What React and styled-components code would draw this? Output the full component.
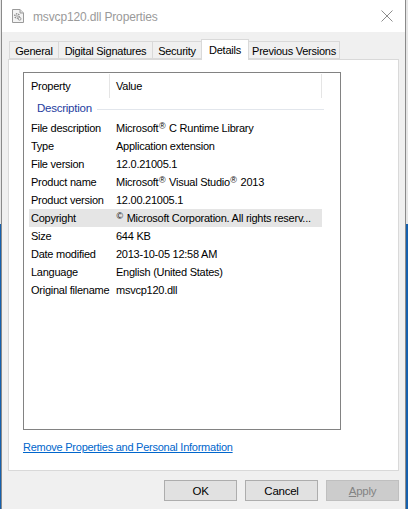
import React from "react";
import styled, { createGlobalStyle } from "styled-components";

const Global = createGlobalStyle`
  html, body { margin: 0; padding: 0; }
  body {
    width: 408px;
    height: 509px;
    overflow: hidden;
    background: linear-gradient(to bottom, #e6e6e6 0, #e6e6e6 224px, #1560ad 224px);
    font-family: "Liberation Sans", Arial, sans-serif;
    font-size: 11px;
    letter-spacing: -0.25px;
    color: #000;
  }
  * { box-sizing: border-box; }
`;

const Window = styled.div`
  margin-left: 1px;
  width: 405px;
  height: 509px;
  background: #f0f0f0;
  border-left: 1px solid #8a8a8a;
  border-right: 1px solid #8a8a8a;
  display: flex;
  flex-direction: column;
`;

const TitleBar = styled.div`
  height: 32px;
  background: #fff;
  display: flex;
  align-items: center;
  padding-left: 10px;
  padding-right: 10px;
  flex-shrink: 0;
`;

const TitleText = styled.div`
  margin-left: 9px;
  font-size: 12px;
  letter-spacing: -0.15px;
  color: #9a9a9a;
  flex: 1;
  padding-top: 1px;
`;

const CloseBtn = styled.div`
  width: 12px;
  height: 12px;
  margin-right: 2px;
  display: flex;
`;

const TabStrip = styled.div`
  display: flex;
  align-items: flex-end;
  margin: 7px 0 0 7px;
  height: 20px;
  position: relative;
  z-index: 1;
`;

const Tab = styled.div`
  width: ${(p) => p.$w}px;
  height: ${(p) => (p.$active ? 21 : 18)}px;
  margin-left: -1px;
  margin-bottom: ${(p) => (p.$active ? -1 : 0)}px;
  border: 1px solid #d9d9d9;
  border-bottom: ${(p) => (p.$active ? "none" : "1px solid #d9d9d9")};
  background: ${(p) => (p.$active ? "#fff" : "#f0f0f0")};
  display: flex;
  align-items: center;
  justify-content: center;
  padding-top: ${(p) => (p.$active ? 0 : 1)}px;
  white-space: nowrap;
  &:first-child { margin-left: 0; }
`;

const Panel = styled.div`
  margin: 0 6px;
  height: 412px;
  background: #fff;
  border: 1px solid #d9d9d9;
  display: flex;
  flex-direction: column;
  align-items: flex-start;
`;

const ListBox = styled.div`
  margin: 12px 0 0 14px;
  width: 318px;
  height: 358px;
  border: 1px solid #828282;
  background: #fff;
`;

const Header = styled.div`
  display: grid;
  grid-template-columns: 86px 212px 1fr;
  height: 26px;
  align-items: stretch;
`;

const HeadCell = styled.div`
  display: flex;
  align-items: center;
  padding-left: ${(p) => p.$pad}px;
  margin: 1px 0 1px 0;
  border-right: ${(p) => (p.$divider ? "1px solid #e5e5e5" : "none")};
`;

const Group = styled.div`
  display: flex;
  align-items: center;
  height: 20px;
  padding-left: 13px;
  padding-bottom: 2px;
  color: #1e3ca0;
  font-size: 11.5px;
`;

const GroupLine = styled.div`
  width: 227px;
  height: 1px;
  margin-left: 5px;
  margin-top: 2px;
  background: #e2e6ec;
`;

const Row = styled.div`
  display: grid;
  grid-template-columns: 85px 1fr;
  height: 18px;
  margin-left: 5px;
  width: 293px;
  padding-left: 2px;
  align-items: center;
  white-space: nowrap;
  background: ${(p) => (p.$selected ? "#e5e5e5" : "transparent")};
`;

const Sup = styled.span`
  font-size: 9px;
  position: relative;
  top: -3px;
  margin: 0 1px 0 0.5px;
`;

const Link = styled.a`
  display: block;
  margin: 10px 0 0 14px;
  line-height: 14px;
  color: #0066cc;
  text-decoration: underline;
  cursor: pointer;
`;

const ButtonRow = styled.div`
  display: flex;
  justify-content: flex-end;
  gap: 8px;
  margin: 9px 6px 0 0;
`;

const Button = styled.div`
  width: 73px;
  height: 21px;
  display: flex;
  align-items: center;
  justify-content: center;
  background: ${(p) => (p.$disabled ? "#cccccc" : "#e1e1e1")};
  border: 1px solid ${(p) => (p.$disabled ? "#bfbfbf" : "#adadad")};
  color: ${(p) => (p.$disabled ? "#838383" : "#000")};
  font-size: 11.5px;
  u { text-decoration: underline; }
`;

const FileIcon = () => (
  <svg width="12" height="14" viewBox="0 0 12 14">
    <path d="M0.5 0.5 H8 L11.5 4 V13.5 H0.5 Z" fill="#f4f4f4" stroke="#9a9a9a" />
    <path d="M8 0.5 V4 H11.5" fill="#e0e0e0" stroke="#9a9a9a" />
    <circle cx="5" cy="7" r="2.2" fill="none" stroke="#8a8a8a" strokeWidth="1.4" strokeDasharray="1.2 0.9" />
    <circle cx="5" cy="7" r="0.8" fill="#8a8a8a" />
    <circle cx="7.6" cy="9.8" r="1.4" fill="none" stroke="#9a9a9a" strokeWidth="1" />
  </svg>
);

const CloseIcon = () => (
  <svg width="12" height="12" viewBox="0 0 12 12">
    <path d="M0.5 0.5 L11.5 11.5 M11.5 0.5 L0.5 11.5" stroke="#8c8c8c" strokeWidth="1" />
  </svg>
);

const tabs = [
  { label: "General", w: 50 },
  { label: "Digital Signatures", w: 95 },
  { label: "Security", w: 50 },
  { label: "Details", w: 48, active: true },
  { label: "Previous Versions", w: 92 },
];

const rows = [
  ["File description", <>Microsoft<Sup>®</Sup> C Runtime Library</>],
  ["Type", "Application extension"],
  ["File version", "12.0.21005.1"],
  ["Product name", <>Microsoft<Sup>®</Sup> Visual Studio<Sup>®</Sup> 2013</>],
  ["Product version", "12.00.21005.1"],
  ["Copyright", <><Sup>©</Sup> Microsoft Corporation. All rights reserv...</>, true],
  ["Size", "644 KB"],
  ["Date modified", "2013-10-05 12:58 AM"],
  ["Language", "English (United States)"],
  ["Original filename", "msvcp120.dll"],
];

export default function App() {
  return (
    <>
      <Global />
      <Window>
        <TitleBar>
          <FileIcon />
          <TitleText>msvcp120.dll Properties</TitleText>
          <CloseBtn>
            <CloseIcon />
          </CloseBtn>
        </TitleBar>
        <TabStrip>
          {tabs.map((t) => (
            <Tab key={t.label} $w={t.w} $active={t.active}>
              {t.label}
            </Tab>
          ))}
        </TabStrip>
        <Panel>
          <ListBox>
            <Header>
              <HeadCell $pad={7} $divider>Property</HeadCell>
              <HeadCell $pad={6} $divider>Value</HeadCell>
              <HeadCell />
            </Header>
            <Group>
              Description
              <GroupLine />
            </Group>
            {rows.map(([k, v, sel]) => (
              <Row key={k} $selected={sel}>
                <span>{k}</span>
                <span>{v}</span>
              </Row>
            ))}
          </ListBox>
          <Link>Remove Properties and Personal Information</Link>
        </Panel>
        <ButtonRow>
          <Button>OK</Button>
          <Button>Cancel</Button>
          <Button $disabled>
            <span><u>A</u>pply</span>
          </Button>
        </ButtonRow>
      </Window>
    </>
  );
}
